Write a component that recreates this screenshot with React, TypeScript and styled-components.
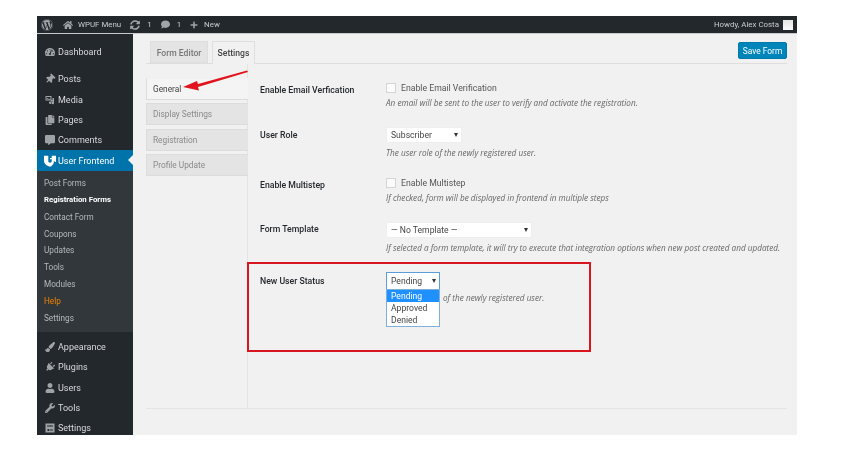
import React from "react";
import styled, { createGlobalStyle } from "styled-components";
import {
  FaWordpress, FaHome, FaSyncAlt, FaComment, FaPlus, FaTachometerAlt, FaThumbtack,
  FaCopy, FaCommentAlt, FaPaintBrush, FaPlug, FaUser, FaWrench,
} from "react-icons/fa";

const Global = createGlobalStyle`
  html, body { margin: 0; padding: 0; background: #fff; }
  body { font-family: Roboto, "Open Sans", "Liberation Sans", sans-serif; width: 862px; height: 451px; overflow: hidden; }
  * { box-sizing: border-box; }
`;

const Page = styled.div`
  width: 760px;
  height: 419px;
  margin: 16px 0 0 37px;
  display: flex;
  flex-direction: column;
  position: relative;
  background: #f1f1f1;
  filter: blur(0.35px);
`;
const AdminBar = styled.header`
  height: 18px;
  flex: none;
  background: #23282d;
  font-size: 7.9px;
  display: flex;
  align-items: center;
  padding: 0 4px;
  border-bottom: 1px solid #c9cbcc;
`;
const BarItem = styled.span<{ $gap?: number; $ml?: number }>`
  display: inline-flex;
  align-items: center;
  gap: ${(p) => p.$gap ?? 3}px;
  margin-left: ${(p) => p.$ml ?? 0}px;
  color: #c8cccf;
  svg { color: #a0a5aa; }
`;
const Spacer = styled.div`flex: 1;`;
const Avatar = styled.span`
  width: 10px;
  height: 10px;
  margin-left: 4px;
  background: linear-gradient(#e4e4e4, #fafafa);
`;
const Body = styled.div`
  flex: 1;
  display: flex;
  min-height: 0;
`;
const Sidebar = styled.nav`
  width: 96px;
  flex: none;
  background: #23282d;
  padding-top: 8px;
  overflow: hidden;
`;
const MenuItem = styled.div<{ $active?: boolean }>`
  height: 20.3px;
  display: flex;
  align-items: center;
  padding-left: 5px;
  color: ${(p) => (p.$active ? "#fff" : "#d9dadb")};
  font-size: 9px;
  background: ${(p) => (p.$active ? "#0073aa" : "transparent")};
  position: relative;
`;
const MenuIcon = styled.span<{ $tilt?: number }>`
  width: 16px;
  display: inline-flex;
  justify-content: center;
  color: #9ea3a8;
  svg { width: 10px; height: 10px; transform: rotate(${(p) => p.$tilt ?? 0}deg); }
`;
const ActiveIcon = styled(MenuIcon)`
  color: #fff;
  svg { width: 12px; height: 12px; }
`;
const Gap = styled.div<{ $h: number }>`height: ${(p) => p.$h}px;`;
const Notch = styled.span`
  position: absolute;
  right: 0;
  top: 5px;
  border: 5px solid transparent;
  border-right-color: #f1f1f1;
  border-left-width: 0;
`;
const SubMenu = styled.div`
  background: #32373c;
  padding: 4.5px 0 5.5px 7px;
  margin-bottom: 5px;
`;
const SubItem = styled.div<{ $bold?: boolean; $color?: string }>`
  height: 16.8px;
  line-height: 16.8px;
  font-size: ${(p) => (p.$bold ? 7.8 : 8.2)}px;
  font-weight: ${(p) => (p.$bold ? 700 : 400)};
  color: ${(p) => p.$color ?? "#b4b9be"};
`;
const Main = styled.main`
  flex: 1;
  padding: 7px 10px 0 13px;
  display: flex;
  flex-direction: column;
`;
const TabBar = styled.div`
  height: 23px;
  display: flex;
  align-items: flex-start;
  gap: 4px;
  padding-left: 4px;
  border-bottom: 1px solid #dedede;
`;
const Tab = styled.div<{ $active?: boolean }>`
  height: ${(p) => (p.$active ? 23 : 22)}px;
  width: ${(p) => (p.$active ? 43 : 58)}px;
  text-align: center;
  line-height: 22px;
  font-size: 8.6px;
  font-weight: 500;
  color: ${(p) => (p.$active ? "#444" : "#767676")};
  background: ${(p) => (p.$active ? "#f1f1f1" : "#e4e4e4")};
  border: 1px solid #dedede;
  border-bottom: ${(p) => (p.$active ? "none" : "1px solid #dedede")};
`;
const SaveButton = styled.button`
  margin-left: auto;
  width: 49px;
  height: 17px;
  margin-top: 1px;
  padding: 0;
  font: 400 8.4px Roboto, sans-serif;
  color: #fff;
  background: #0085ba;
  border: 1px solid #0079ab;
  border-radius: 2px;
`;
const Panel = styled.div`
  display: flex;
  height: 345px;
  border-bottom: 1px solid #e4e4e4;
`;
const SideTabs = styled.div`
  width: 102px;
  flex: none;
  padding-top: 14px;
  display: flex;
  flex-direction: column;
  gap: 3.3px;
  border-right: 1px solid #e4e4e4;
`;
const SideTab = styled.div<{ $active?: boolean }>`
  height: 22px;
  line-height: 20px;
  padding-left: 6px;
  font-size: 8.3px;
  color: ${(p) => (p.$active ? "#444" : "#8a8a8a")};
  background: ${(p) => (p.$active ? "#f4f4f4" : "#e4e4e4")};
  border: 1px solid #dcdcdc;
  border-right: none;
  border-top-color: ${(p) => (p.$active ? "#f1f1f1" : "#dcdcdc")};
  margin-right: -1px;
`;
const Fields = styled.div`
  flex: 1;
  padding: 0 0 0 12px;
`;
const Row = styled.div<{ $h: number; $pt?: number }>`
  height: ${(p) => p.$h}px;
  padding-top: ${(p) => p.$pt ?? 0}px;
  display: grid;
  grid-template-columns: 126px 1fr;
  align-items: start;
`;
const Label = styled.div<{ $mt?: number }>`
  font-size: 8.7px;
  font-weight: 500;
  color: #23282d;
  margin-top: ${(p) => p.$mt ?? 0}px;
  line-height: 12px;
`;
const CheckLine = styled.div`
  display: flex;
  align-items: center;
  gap: 5px;
  font-size: 8.7px;
  color: #555;
  height: 12px;
`;
const Check = styled.span`
  width: 10px;
  height: 10px;
  background: #fbfbfb;
  border: 1px solid #d4d4d4;
`;
const Desc = styled.p<{ $mt?: number; $ml?: number }>`
  margin: ${(p) => p.$mt ?? 3}px 0 0 ${(p) => p.$ml ?? 0}px;
  font-family: "Open Sans", sans-serif;
  font-size: 8.2px;
  font-style: italic;
  color: #666;
  line-height: 11px;
  white-space: nowrap;
`;
const Select = styled.div<{ $w: number; $focus?: boolean }>`
  width: ${(p) => p.$w}px;
  height: ${(p) => (p.$focus ? 18 : 16)}px;
  background: #fff;
  border: 1px solid ${(p) => (p.$focus ? "#5b9dd9" : "#eeeeee")};
  display: flex;
  align-items: center;
  justify-content: space-between;
  padding: 0 3px 0 4px;
  font-size: 8.6px;
  color: #444;
  position: relative;
  &::after {
    content: "";
    border: 2.5px solid transparent;
    border-top: 4px solid #333;
    border-bottom: none;
  }
`;
const Options = styled.ul`
  position: absolute;
  left: -1px;
  top: 16px;
  width: 54px;
  margin: 0;
  padding: 0;
  list-style: none;
  background: #fff;
  border: 1px solid #7fb0dc;
  z-index: 2;
`;
const Option = styled.li<{ $sel?: boolean }>`
  height: 12px;
  line-height: 12px;
  padding-left: 4px;
  font-size: 8.6px;
  color: ${(p) => (p.$sel ? "#fff" : "#444")};
  background: ${(p) => (p.$sel ? "#1e90ff" : "#fff")};
`;
const Highlight = styled.div`
  position: absolute;
  left: 210px;
  top: 246px;
  width: 344px;
  height: 90px;
  border: 2px solid #d9151f;
  pointer-events: none;
`;
const Arrow = styled.svg`
  position: absolute;
  left: 140px;
  top: 50px;
  pointer-events: none;
`;
const WpufLogo = () => (
  <svg viewBox="0 0 14 14" fill="#fff">
    <path d="M0 1h5v6c0 1.2.8 2 2 2s2-.8 2-2V5H7V3.4h2V1h5v6c0 .4 0 .8-.1 1.2H12.6V7.2H11.4V9c-.8 2.4-2.4 4-4.4 4.6C3 12.6 0 10 0 7z" />
  </svg>
);
const MediaIcon = () => (
  <svg viewBox="0 0 20 20" fill="currentColor">
    <path d="M1 2h12v9H1z" />
    <path d="M3 4h8v5H3z" fill="#23282d" />
    <path d="M5 6a1 1 0 1 0 .01 0zM4 9l2-1 2-1 3 2z" />
    <path d="M9 13h9V6h-3v4h-3v3a2.6 2.6 0 1 1-3 0z" />
    <path d="M16 11h2v5a2.4 2.4 0 1 1-2-2.3z" />
  </svg>
);
const SettingsIcon = () => (
  <svg viewBox="0 0 20 20">
    <path d="M1 1h18v18H1z" fill="currentColor" />
    <path d="M4 6h7M14 6h2M4 14h2M9 14h7M12 4v4M7 12v4" stroke="#23282d" strokeWidth="2" fill="none" />
  </svg>
);

const top = [
  { icon: <FaThumbtack />, label: "Posts", tilt: 45 },
  { icon: <MediaIcon />, label: "Media" },
  { icon: <FaCopy />, label: "Pages" },
  { icon: <FaCommentAlt />, label: "Comments" },
];
const bottom = [
  { icon: <FaPaintBrush />, label: "Appearance" },
  { icon: <FaPlug />, label: "Plugins", tilt: 45 },
  { icon: <FaUser />, label: "Users" },
  { icon: <FaWrench />, label: "Tools" },
  { icon: <SettingsIcon />, label: "Settings" },
];
const subs = ["Post Forms", "Registration Forms", "Contact Form", "Coupons", "Updates", "Tools", "Modules", "Help", "Settings"];

export default function App() {
  return (
    <>
      <Global />
      <Page>
        <AdminBar>
          <BarItem><FaWordpress size={12} /></BarItem>
          <BarItem $ml={10} $gap={5}><FaHome size={10} />WPUF Menu</BarItem>
          <BarItem $ml={9} $gap={7}><FaSyncAlt size={10} />1</BarItem>
          <BarItem $ml={9} $gap={7}><FaComment size={9} />1</BarItem>
          <BarItem $ml={9} $gap={6}><FaPlus size={8} />New</BarItem>
          <Spacer />
          <BarItem>Howdy, Alex Costa</BarItem>
          <Avatar />
        </AdminBar>
        <Body>
          <Sidebar>
            <MenuItem><MenuIcon><FaTachometerAlt /></MenuIcon><span>Dashboard</span></MenuItem>
            <Gap $h={7} />
            {top.map((m) => (
              <MenuItem key={m.label}><MenuIcon $tilt={m.tilt}>{m.icon}</MenuIcon><span>{m.label}</span></MenuItem>
            ))}
            <MenuItem $active>
              <ActiveIcon><WpufLogo /></ActiveIcon><span>User Frontend</span>
              <Notch />
            </MenuItem>
            <SubMenu>
              {subs.map((s) => (
                <SubItem
                  key={s}
                  $bold={s === "Registration Forms"}
                  $color={s === "Registration Forms" ? "#fff" : s === "Help" ? "#f18500" : undefined}
                >
                  {s}
                </SubItem>
              ))}
            </SubMenu>
            {bottom.map((m) => (
              <MenuItem key={m.label}><MenuIcon $tilt={m.tilt}>{m.icon}</MenuIcon><span>{m.label}</span></MenuItem>
            ))}
          </Sidebar>
          <Main>
            <TabBar>
              <Tab>Form Editor</Tab>
              <Tab $active>Settings</Tab>
              <SaveButton>Save Form</SaveButton>
            </TabBar>
            <Panel>
              <SideTabs>
                <SideTab $active>General</SideTab>
                <SideTab>Display Settings</SideTab>
                <SideTab>Registration</SideTab>
                <SideTab>Profile Update</SideTab>
              </SideTabs>
              <Fields>
                <Row $h={63} $pt={18}>
                  <Label $mt={2}>Enable Email Verfication</Label>
                  <div>
                    <CheckLine><Check />Enable Email Verification</CheckLine>
                    <Desc>An email will be sent to the user to verify and activate the registration.</Desc>
                  </div>
                </Row>
                <Row $h={50}>
                  <Label $mt={2}>User Role</Label>
                  <div>
                    <Select $w={76}>Subscriber</Select>
                    <Desc $mt={4}>The user role of the newly registered user.</Desc>
                  </div>
                </Row>
                <Row $h={45}>
                  <Label $mt={2}>Enable Multistep</Label>
                  <div>
                    <CheckLine><Check />Enable Multistep</CheckLine>
                    <Desc>If checked, form will be displayed in frontend in multiple steps</Desc>
                  </div>
                </Row>
                <Row $h={50}>
                  <Label $mt={1}>Form Template</Label>
                  <div>
                    <Select $w={146}>— No Template —</Select>
                    <Desc $mt={4}>If selected a form template, it will try to execute that integration options when new post created and updated.</Desc>
                  </div>
                </Row>
                <Row $h={60}>
                  <Label $mt={3}>New User Status</Label>
                  <div>
                    <Select $w={54} $focus>
                      Pending
                      <Options>
                        <Option $sel>Pending</Option>
                        <Option>Approved</Option>
                        <Option>Denied</Option>
                      </Options>
                    </Select>
                    <Desc $mt={2} $ml={57}>of the newly registered user.</Desc>
                  </div>
                </Row>
              </Fields>
            </Panel>
          </Main>
        </Body>
        <Highlight />
        <Arrow width="80" height="40" viewBox="0 0 80 40">
          <path d="M70 4.5 L71 6 L21 21 L22 24.5 L6 21 L20 15 L21 18 Z" fill="#e0141c" />
        </Arrow>
      </Page>
    </>
  );
}
